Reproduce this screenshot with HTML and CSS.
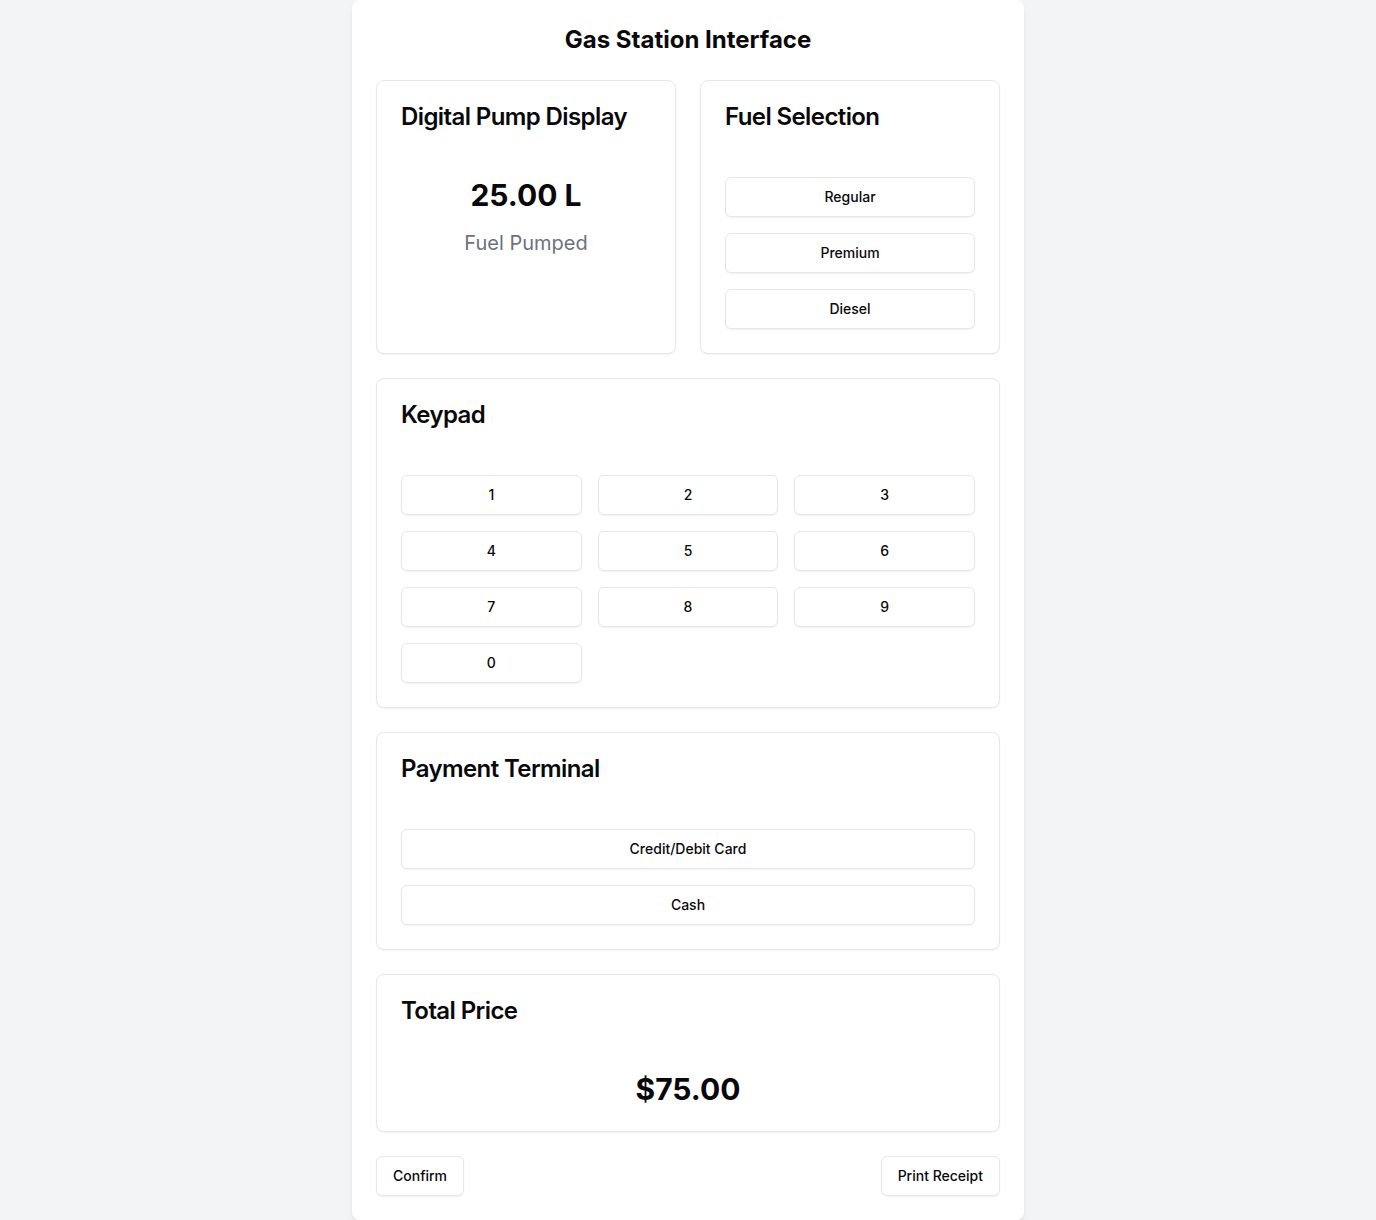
FILE: index.html
```html
<!DOCTYPE html>
<html lang="en">
<head>
<meta charset="utf-8">
<title>Gas Station Interface</title>
<link rel="stylesheet" href="styles.css">
</head>
<body>
<main class="panel">
  <h1 class="page-title">Gas Station Interface</h1>
  <div class="stack">
    <div class="two-col">
      <section class="card">
        <div class="card-header"><h3 class="card-title">Digital Pump Display</h3></div>
        <div class="card-content center">
          <div class="big-value">25.00 L</div>
          <div class="sub-label">Fuel Pumped</div>
        </div>
      </section>
      <section class="card">
        <div class="card-header"><h3 class="card-title">Fuel Selection</h3></div>
        <div class="card-content list">
          <button class="btn">Regular</button>
          <button class="btn">Premium</button>
          <button class="btn">Diesel</button>
        </div>
      </section>
    </div>
    <section class="card">
      <div class="card-header"><h3 class="card-title">Keypad</h3></div>
      <div class="card-content keypad">
        <button class="btn">1</button>
        <button class="btn">2</button>
        <button class="btn">3</button>
        <button class="btn">4</button>
        <button class="btn">5</button>
        <button class="btn">6</button>
        <button class="btn">7</button>
        <button class="btn">8</button>
        <button class="btn">9</button>
        <button class="btn">0</button>
      </div>
    </section>
    <section class="card">
      <div class="card-header"><h3 class="card-title">Payment Terminal</h3></div>
      <div class="card-content list">
        <button class="btn">Credit/Debit Card</button>
        <button class="btn">Cash</button>
      </div>
    </section>
    <section class="card">
      <div class="card-header"><h3 class="card-title">Total Price</h3></div>
      <div class="card-content center">
        <div class="price">$75.00</div>
      </div>
    </section>
    <div class="actions">
      <button class="btn btn-auto">Confirm</button>
      <button class="btn btn-auto">Print Receipt</button>
    </div>
  </div>
</main>
</body>
</html>
```

FILE: styles.css
```css
* { box-sizing: border-box; }
html, body { margin: 0; padding: 0; }
body {
  background: #f3f4f6;
  font-family: Inter, "Liberation Sans", sans-serif;
  color: #09090b;
}
.panel {
  width: 672px;
  margin: 0 auto;
  background: #ffffff;
  border-radius: 8px;
  padding: 24px;
  box-shadow: 0 4px 6px -1px rgba(0,0,0,0.08), 0 2px 4px -2px rgba(0,0,0,0.06);
}
.page-title {
  margin: 0 0 24px;
  font-size: 24px;
  line-height: 32px;
  font-weight: 700;
  text-align: center;
}
.stack {
  display: flex;
  flex-direction: column;
  gap: 24px;
}
.two-col {
  display: grid;
  grid-template-columns: 1fr 1fr;
  gap: 24px;
}
.card {
  border: 1px solid #e5e7eb;
  border-radius: 8px;
  background: #fff;
  box-shadow: 0 1px 2px 0 rgba(0,0,0,0.05);
}
.card-header { padding: 24px; }
.card-title {
  margin: 0;
  font-size: 24px;
  line-height: 24px;
  font-weight: 600;
  letter-spacing: -0.6px;
}
.card-content { padding: 24px; }
.center { text-align: center; }
.big-value {
  font-size: 30px;
  line-height: 36px;
  font-weight: 700;
}
.sub-label {
  margin-top: 16px;
  font-size: 20px;
  line-height: 28px;
  color: #6b7280;
}
.price {
  font-size: 30px;
  line-height: 36px;
  font-weight: 700;
}
.list {
  display: flex;
  flex-direction: column;
  gap: 16px;
}
.keypad {
  display: grid;
  grid-template-columns: repeat(3, 1fr);
  gap: 16px;
}
.btn {
  height: 40px;
  padding: 0 16px 1px;
  border: 1px solid #e5e7eb;
  border-radius: 6px;
  background: #fff;
  font-family: Inter, "Liberation Sans", sans-serif;
  font-size: 14px;
  line-height: 20px;
  font-weight: 500;
  color: #09090b;
  box-shadow: 0 1px 2px 0 rgba(0,0,0,0.05);
  cursor: pointer;
}
.actions {
  display: flex;
  justify-content: space-between;
}
```
